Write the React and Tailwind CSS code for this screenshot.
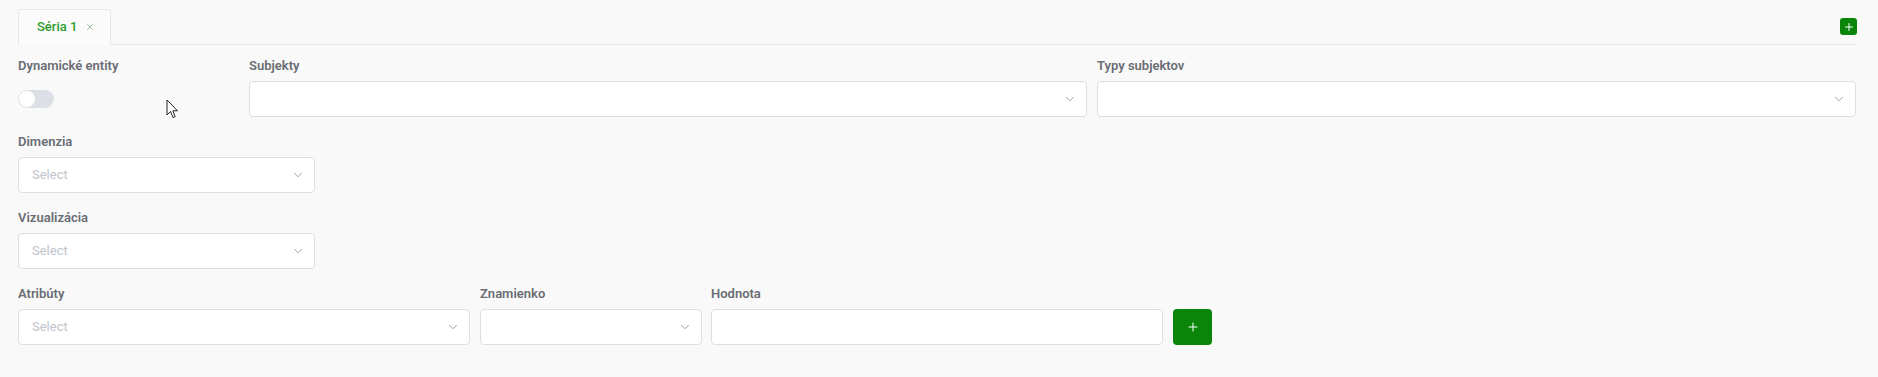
import { ChevronDown, Plus, X } from 'lucide-react';

function Label({ children }) {
  return <div className="h-5 mb-[5px] text-[13px] leading-5 font-semibold text-[#6a6d74]">{children}</div>;
}

function SelectBox({ placeholder, className = '' }) {
  return (
    <div className={`h-9 flex items-center justify-between rounded-[4px] border border-[#dcdfe6] bg-white pl-[13px] pr-[9px] ${className}`}>
      <span className="text-[13px] text-[#c0c4cc]">{placeholder}</span>
      <ChevronDown size={14} strokeWidth={1.4} className="text-[#8a8d93]" />
    </div>
  );
}

export default function App() {
  return (
    <div className="relative min-h-[377px] bg-[#f9f9f9] pl-[18px] pr-[22px] pt-[9px] font-['Roboto',sans-serif]">
      {/* tabs */}
      <div className="flex h-9 items-end justify-between border-b border-[#e4e7ed]">
        <div className="-mb-px flex h-9 w-[93px] items-center gap-[8px] rounded-t-[3px] border border-b-0 border-[#e4e7ed] bg-[#fbfbfb] pl-[18px] pb-px">
          <span className="text-[13px] font-medium text-[#2e9b2e]">Séria 1</span>
          <X size={10} strokeWidth={1.5} className="text-[#5f9f6f]" />
        </div>
        <button className="mb-[9px] -mr-px flex h-[17px] w-[17px] items-center justify-center rounded-[3px] bg-[#0a850a] text-white">
          <Plus size={12} strokeWidth={2} />
        </button>
      </div>

      <div className="flex flex-col gap-[15px] pt-[11px]">
        <div className="flex gap-[10px]">
          <div className="w-[221px]">
            <Label>Dynamické entity</Label>
            <div className="flex h-9 items-center">
              <div className="flex h-[18px] w-9 items-center rounded-full bg-[#dcdfe6] px-px">
                <div className="h-4 w-4 rounded-full bg-white" />
              </div>
            </div>
          </div>
          <div className="w-[838px]">
            <Label>Subjekty</Label>
            <SelectBox />
          </div>
          <div className="flex-1">
            <Label>Typy subjektov</Label>
            <SelectBox />
          </div>
        </div>

        <div>
          <Label>Dimenzia</Label>
          <SelectBox placeholder="Select" className="w-[297px]" />
        </div>

        <div>
          <Label>Vizualizácia</Label>
          <SelectBox placeholder="Select" className="w-[297px]" />
        </div>

        <div className="flex items-end gap-[10px]">
          <div className="w-[452px]">
            <Label>Atribúty</Label>
            <SelectBox placeholder="Select" />
          </div>
          <div className="w-[222px] -mr-px">
            <Label>Znamienko</Label>
            <SelectBox />
          </div>
          <div className="w-[452px]">
            <Label>Hodnota</Label>
            <div className="h-9 rounded-[4px] border border-[#dcdfe6] bg-white" />
          </div>
          <button className="flex h-9 w-[39px] items-center justify-center rounded-[4px] bg-[#0a850a] text-white">
            <Plus size={14} strokeWidth={1.75} />
          </button>
        </div>
      </div>

      {/* mouse cursor */}
      <svg className="absolute left-[166px] top-[99px]" width="13" height="20" viewBox="0 0 13 20">
        <path d="M1 1 L1 16 L4.5 12.5 L7 18.5 L9.2 17.6 L6.8 11.8 L11.5 11.8 Z" fill="white" stroke="#222" strokeWidth="1" strokeLinejoin="round" />
      </svg>
    </div>
  );
}
